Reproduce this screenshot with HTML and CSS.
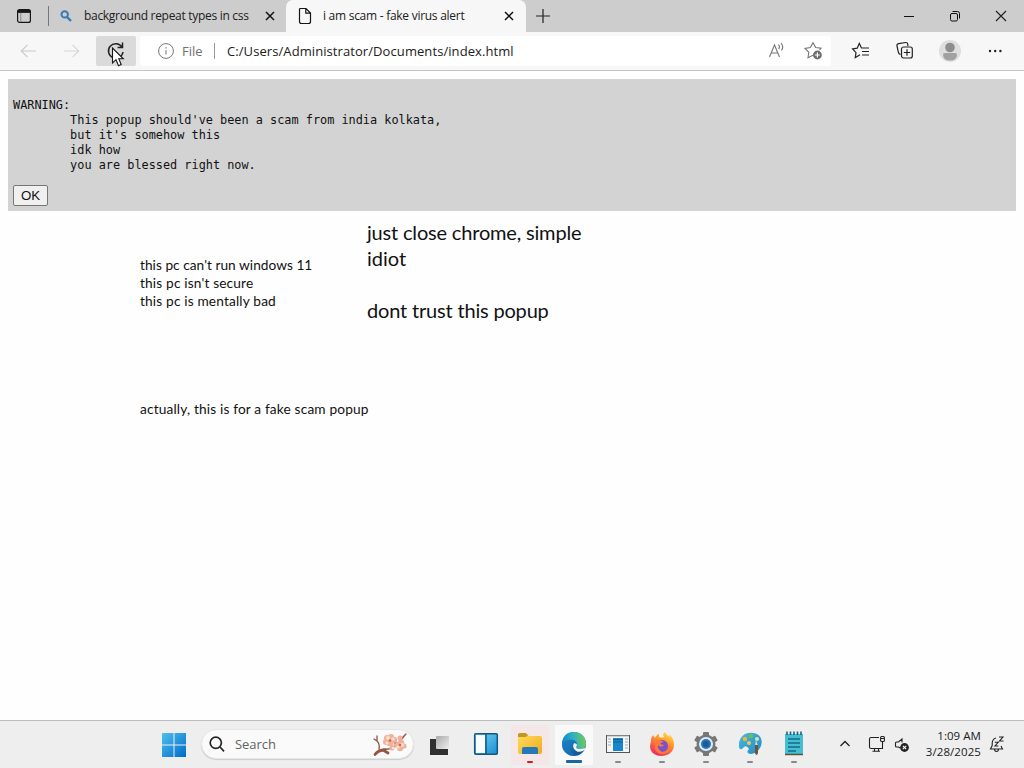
FILE: index.html
```html
<!DOCTYPE html>
<html lang="en">
<head>
<meta charset="utf-8">
<title>i am scam - fake virus alert</title>
<link rel="stylesheet" href="styles.css">
</head>
<body>
<div class="desktop">
  <header class="tabstrip">
    <div class="tab-actions">
      <svg width="16" height="16" viewBox="0 0 16 16" fill="none" stroke="#171717" stroke-width="1.2"><rect x="1.6" y="1.6" width="12.8" height="12.8" rx="2"/><path d="M1.6 3.4H14.4" stroke-width="3"/><path d="M4.8 5V14" stroke="#777" stroke-width=".8"/></svg>
    </div>
    <div class="tab">
      <svg class="favicon" width="16" height="16" viewBox="0 0 16 16" fill="none" stroke="#3979b5" stroke-width="2"><circle cx="6.7" cy="6.4" r="3.2"/><path d="M9 9L13 13" stroke-width="2.4"/></svg>
      <span class="tab-title first-title">background repeat types in css</span>
      <svg class="tab-close" width="10" height="10" viewBox="0 0 10 10" stroke="#111" stroke-width="1.5"><path d="M1 1L9 9M9 1L1 9"/></svg>
    </div>
    <div class="tab active">
      <svg class="favicon" width="16" height="18" viewBox="0 0 16 18" fill="none" stroke="#151515" stroke-width="1.2"><path d="M3.5 1.5H9L13.5 6V14.5Q13.5 16.5 11.5 16.5H4.5Q2.5 16.5 2.5 14.5V2.5Q2.5 1.5 3.5 1.5M8.8 1.7V6.2H13.4"/></svg>
      <span class="tab-title second-title">i am scam - fake virus alert</span>
      <svg class="tab-close" width="10" height="10" viewBox="0 0 10 10" stroke="#111" stroke-width="1.5"><path d="M1 1L9 9M9 1L1 9"/></svg>
    </div>
    <svg class="new-tab" width="16" height="16" viewBox="0 0 16 16" stroke="#222" stroke-width="1.2"><path d="M8 1V15M1 8H15"/></svg>
    <div class="window-controls">
      <svg width="46" height="32" viewBox="0 0 46 32" stroke="#111"><path d="M18 16.5H28"/></svg>
      <svg width="46" height="32" viewBox="0 0 46 32" fill="none" stroke="#111"><rect x="18.5" y="13.5" width="7" height="7.5" rx="1.5"/><path d="M20.5 11.5H25.5Q27.5 11.5 27.5 13.5V18.5"/></svg>
      <svg width="46" height="32" viewBox="0 0 46 32" stroke="#222" stroke-width="1.2"><path d="M18 11L28 21M28 11L18 21"/></svg>
    </div>
  </header>

  <nav class="toolbar">
    <svg class="nav-icon" width="16" height="16" viewBox="0 0 16 16" fill="none" stroke="#c9c9c9" stroke-width="1.1"><path d="M16 8H1.2M7.5 1.8L1.2 8L7.5 14.2"/></svg>
    <svg class="nav-icon" width="16" height="16" viewBox="0 0 16 16" fill="none" stroke="#d6d6d6" stroke-width="1.1"><path d="M0 8H14.8M8.5 1.8L14.8 8L8.5 14.2"/></svg>
    <div class="reload">
      <svg width="20" height="20" viewBox="0 0 20 20" fill="none" stroke="#222" stroke-width="1.5"><path d="M17 11A7.3 7.3 0 1 1 15.8 5.8M16.5 1.6V6.5H11.6"/></svg>
      <svg class="pointer" width="14" height="21" viewBox="0 0 14 21"><path d="M1.5 1V16L5 12.7L7.5 18.7L10.2 17.5L7.8 11.8H12.3Z" fill="#fff" stroke="#171717" stroke-width="1.1"/></svg>
    </div>
    <div class="address">
      <svg width="16" height="16" viewBox="0 0 16 16" fill="none" stroke="#777"><circle cx="8" cy="8" r="7.4"/><path d="M8 7V11.5M8 4V5.6"/></svg>
      <span class="scheme">File</span><span class="divider"></span><span class="url">C:/Users/Administrator/Documents/index.html</span>
      <svg class="read" width="18" height="18" viewBox="0 0 18 18" fill="none" stroke="#777" stroke-width="1.1"><path d="M1.5 15L6.5 3L11.5 15M3.1 11H9.9M10.5 2.5Q12.2 4.5 10.8 7M13 1Q16 4.5 13.5 8.5"/></svg>
      <svg class="star" width="20" height="20" viewBox="0 0 20 20" fill="none" stroke="#777" stroke-width="1.1"><path d="M15.5 8.8L17 7.2L11.7 6.6L9 1.7L6.3 6.6L1 7.5L4.8 11.3L4 16.7L9 14.3"/><circle cx="13.4" cy="14" r="4.4" fill="#6b6b6b" stroke="none"/><path d="M13.4 11.5V16.5M10.9 14H15.9" stroke="#fff" stroke-width="1.2"/></svg>
    </div>
    <div class="tools">
      <svg width="20" height="20" viewBox="0 0 20 20" fill="none" stroke="#222" stroke-width="1.2"><path d="M13 7H10.5L8.3 2.5L6.2 7.2L1.6 8L5 11.6L4.3 16.5L9 13.8M12 7H18M11 10.5H18M11 14H18"/></svg>
      <svg width="20" height="20" viewBox="0 0 20 20" fill="none" stroke="#222" stroke-width="1.2"><path d="M5.5 13.5Q3.8 13 3.4 11.3L2 5Q1.6 3 3.6 2.6L10.7 1.5Q12.4 1.3 12.8 3.2V5"/><rect x="6.5" y="6" width="10.8" height="11" rx="2"/><path d="M12 8.2V14.8M8.8 11.5H15.2"/></svg>
      <svg width="22" height="22" viewBox="0 0 22 22"><circle cx="11" cy="11" r="11" fill="#dedede"/><circle cx="11" cy="7.5" r="4.8" fill="#8d8d8d"/><path d="M4 14.5Q4 13 6 13H16Q18 13 18 14.5Q18 20.5 11 20.5Q4 20.5 4 14.5Z" fill="#a1a1a1"/></svg>
      <svg width="18" height="18" viewBox="0 0 18 18" fill="#222"><circle cx="4" cy="9" r="1.2"/><circle cx="9.2" cy="9" r="1.2"/><circle cx="14.4" cy="9" r="1.2"/></svg>
    </div>
  </nav>

  <main class="page">
    <section class="warning">
<pre class="message">WARNING:
        This popup should've been a scam from india kolkata,
        but it's somehow this
        idk how
        you are blessed right now.</pre>
      <button class="ok">OK</button>
    </section>
    <div class="notes">
<div class="note small-note"><span class="specs">this pc can't run windows 11</span>
this pc isn't secure
this pc is mentally bad





actually, this is for a fake scam popup</div>
<div class="note large-note">just close chrome, simple
<span class="single-word">idiot</span>

dont trust this popup</div>
    </div>
  </main>

  <footer class="taskbar">
    <div class="start"><svg width="24" height="24" viewBox="0 0 24 24"><defs><linearGradient id="win" x2="1" y2="1"><stop stop-color="#4dc1ed"/><stop offset="1" stop-color="#006ac9"/></linearGradient></defs><path d="M0 0H11.5V11.5H0ZM12.5 0H24V11.5H12.5ZM0 12.5H11.5V24H0ZM12.5 12.5H24V24H12.5Z" fill="url(#win)"/></svg></div>
    <div class="search">
      <svg width="16" height="16" viewBox="0 0 16 16" fill="none" stroke="#252525" stroke-width="1.7"><circle cx="6.8" cy="6.8" r="5.6"/><path d="M11 11L15 15.3"/></svg>
      <span>Search</span>
      <svg class="blossom" width="38" height="26" viewBox="0 0 38 26"><g fill="none" stroke="#935643" stroke-linecap="round"><path d="M4 23Q8 18 18 18Q26 15 34 4M8 18Q9 13 6 10M6 10V5M6 10L3 8M29 9L35 3" stroke-width="1.3"/><path d="M4 23.5Q7 19 14 19M12 19L17 22" stroke-width="2.8"/></g><g fill="#efb199"><circle cx="16" cy="7" r="3"/><circle cx="20" cy="6" r="3"/><circle cx="23" cy="9" r="3.3"/><circle cx="19" cy="12" r="3.5"/><circle cx="15" cy="11" r="3"/><circle cx="26" cy="14" r="3"/><circle cx="30" cy="12" r="3.2"/><circle cx="33" cy="15" r="2.6"/><circle cx="29" cy="17" r="3.2"/><circle cx="29" cy="7" r="2.5"/><circle cx="21" cy="17" r="2.5"/></g><g fill="#fae0cc"><circle cx="17" cy="7" r="2"/><circle cx="22" cy="8" r="1.8"/><circle cx="16" cy="12" r="1.5"/><circle cx="31" cy="14" r="2"/><circle cx="27" cy="16" r="1.7"/><circle cx="22" cy="17" r="1.2"/></g><g fill="#cc6655"><circle cx="19" cy="9.5" r="1.3"/><circle cx="29" cy="14" r="1.3"/><circle cx="24" cy="12" r=".8"/></g></svg>
    </div>
    <div class="apps">
      <div class="app"><svg width="28" height="28" viewBox="0 0 28 28"><defs><linearGradient id="glass" x2="1" y2="1"><stop stop-color="#aaa"/><stop offset="1" stop-color="#eee"/></linearGradient></defs><path d="M4 9H22V25H4Z" fill="#303030"/><rect x="10" y="6" width="13" height="13" rx="1" fill="url(#glass)"/></svg></div>
      <div class="app widget"><svg width="28" height="28" viewBox="0 0 28 28"><defs><linearGradient id="pane" x2="1" y2="1"><stop stop-color="#7bd6fa"/><stop offset="1" stop-color="#178ed0"/></linearGradient></defs><rect x="2.7" y="3.7" width="22.6" height="20.6" rx="1" fill="url(#pane)" stroke="#15577f" stroke-width="1.5"/><path d="M4 5H13V23H4Z" fill="#f8fcff"/><path d="M14 4V24" stroke="#15577f" stroke-width="1.5"/></svg></div>
      <div class="app alert"><svg width="28" height="28" viewBox="0 0 28 28"><defs><linearGradient id="folder" x2="1" y2="1"><stop stop-color="#ffdd5c"/><stop offset="1" stop-color="#f2ab22"/></linearGradient></defs><path d="M2 5Q2 3 4 3H10L13 6H24Q26 6 26 8V22Q26 24 24 24H4Q2 24 2 22Z" fill="url(#folder)"/><path d="M2 7V4.5Q2 3 4 3H9.5L12 5L10 7Z" fill="#c29525"/><path d="M6 24V19Q6 17 8 17H20Q22 17 22 19V24Z" fill="#2379b9"/></svg><i></i></div>
      <div class="app selected"><svg width="28" height="28" viewBox="0 0 28 28"><defs><linearGradient id="edge" x1="0" y1=".5" x2="1" y2=".4"><stop stop-color="#1685cc"/><stop offset=".45" stop-color="#2caec7"/><stop offset="1" stop-color="#70cc55"/></linearGradient><linearGradient id="edge2" x2=".7" y2="1"><stop stop-color="#1a99dc"/><stop offset="1" stop-color="#135294"/></linearGradient></defs><circle cx="14" cy="14" r="12" fill="url(#edge2)"/><path d="M2.1 13C3 5 8 2 14 2C22 2 26 8 26 14C26 17 24 19 20 19C16 19 15.5 17.5 17 15C18 11.5 14 9.5 10 9.7C6 10 3 12 2.1 13Z" fill="url(#edge)"/><path d="M14 13.2C11.5 17 15 22 20 21.8Q23 21.6 25 19.5Q26.5 20 24.5 18Q22.5 19 20 19C16 19 15.5 17.5 17 15Q17 13 14 13.2Z" fill="#f8f9fa"/><path d="M2 14Q5 10 10 10Q14 10 15 12C8 14 10 23 16 25.8C8 27 1 21 2 14Z" fill="#1b78bd" opacity=".55"/></svg><i></i></div>
      <div class="app"><svg width="28" height="28" viewBox="0 0 28 28"><rect x="2.5" y="5.5" width="23" height="17" fill="#f5f5f5" stroke="#545454"/><path d="M3 6H25" stroke="#b2b2b2"/><rect x="9" y="8" width="10" height="13" fill="#1686ce"/><path d="M9 9.5H19M9 12H19" stroke="#166398"/><path d="M4 9H7M4 12H7M4 15H7M21 9H24M21 12H24M21 15H24M21 18H24" stroke="#9bafbd"/></svg><i></i></div>
      <div class="app"><svg width="28" height="28" viewBox="0 0 28 28"><defs><linearGradient id="fire" x1=".8" y1="0" x2=".3" y2="1"><stop stop-color="#ffe643"/><stop offset=".4" stop-color="#ff952c"/><stop offset="1" stop-color="#ee2862"/></linearGradient></defs><path d="M3 11Q3 7 5 5L7 8Q9 4 11 4L11 7Q14 8 16 7Q14 4 17 2Q18 5 22 7L21 4Q26 8 26 15C26 29 2 30 2 16Z" fill="url(#fire)"/><circle cx="14" cy="16" r="6" fill="#7851cc"/><path d="M7 11Q12 9 16 12Q13 12 12 14L16 15Q13 18 10 15Q9 19 14 22Q21 22 21 14Q24 21 18 23Q10 26 7 19Z" fill="#ff7938"/></svg><i></i></div>
      <div class="app"><svg width="28" height="28" viewBox="0 0 28 28"><g transform="translate(14 14)" fill="#777"><g id="teeth"><rect x="-3" y="-12" width="6" height="24" rx="1"/></g><use href="#teeth" transform="rotate(60)"/><use href="#teeth" transform="rotate(120)"/><circle r="9.5"/></g><circle cx="14" cy="14" r="7" fill="#d8edfa"/><circle cx="14" cy="14" r="5" fill="#2873b3"/><circle cx="14" cy="14" r="3" fill="#175c9d"/></svg><i></i></div>
      <div class="app"><svg width="28" height="28" viewBox="0 0 28 28"><defs><linearGradient id="paint" x2="1" y2="1"><stop stop-color="#48b9df"/><stop offset="1" stop-color="#218cc2"/></linearGradient></defs><path d="M3 17C2 5 12 0 21 4C30 9 25 23 15 24Q9 23 13 19Q10 14 7 18Q4 21 3 17Z" fill="url(#paint)"/><circle cx="9" cy="9" r="2.3" fill="#e3b93b"/><circle cx="15" cy="6" r="2.3" fill="#70bd54"/><circle cx="21" cy="9" r="2" fill="#d0e6ae"/><circle cx="13" cy="13" r="2" fill="#f8c453"/><path d="M19 16L20 10L22 16Z" fill="#d5dce0"/><path d="M19 15H22V23Q20.5 27 19 23Z" fill="#74503b"/></svg><i></i></div>
      <div class="app"><svg width="28" height="28" viewBox="0 0 28 28"><path d="M5 4H23V25H5Z" fill="#45bdd2"/><path d="M5 24.5H23" stroke="#5b5335" stroke-width="1.5"/><path d="M7 5V1.5M10.5 5V1.5M14 5V1.5M17.5 5V1.5M21 5V1.5" stroke="#17637d" stroke-width="1.6"/><path d="M8 9H20M8 13H20M8 17H20M8 21H16" stroke="#176c83" stroke-width="1.4"/></svg><i></i></div>
    </div>
    <div class="tray">
      <svg class="chevron" width="12" height="12" viewBox="0 0 12 12" fill="none" stroke="#222" stroke-width="1.3"><path d="M1.5 8L6 3.5L10.5 8"/></svg>
      <svg class="network" width="18" height="18" viewBox="0 0 18 18" fill="none" stroke="#222" stroke-width="1.1"><path d="M11 2.5H3Q1.5 2.5 1.5 4V12Q1.5 13.5 3 13.5H14.5V8M6.5 13.5V16M10.5 13.5V16M4.5 16.2H12"/><rect x="12.6" y="1.5" width="3.8" height="5" rx="1"/><path d="M13 3.5H16M14.5 6.5V9"/></svg>
      <svg class="sound" width="16" height="16" viewBox="0 0 16 16" fill="none" stroke="#222" stroke-width="1.1"><path d="M6 11L4.5 10H2.5Q1.5 10 1.5 9V6Q1.5 5 2.5 5H4.5L8 2V5.5"/><circle cx="10.5" cy="10.5" r="4.4" fill="#222" stroke="none"/><path d="M8.8 8.8L12.2 12.2M12.2 8.8L8.8 12.2" stroke="#fff"/></svg>
      <div class="clock"><div class="time">1:09 AM</div><div class="date">3/28/2025</div></div>
      <svg class="bell" width="16" height="18" viewBox="0 0 16 18" fill="none" stroke="#222" stroke-width="1.1"><path d="M7 3Q3.5 4 3.2 8V10.5L1.5 14H13.5L12 11M5.5 14Q5.5 16.5 7.5 16.5T9.5 14M10 2H14L10.5 6H14.5M5.8 7.3H9.2L6 11H9.3"/></svg>
    </div>
  </footer>
</div>
</body>
</html>
```

FILE: styles.css
```css
* { box-sizing: border-box; }
body { margin: 0; background: #fff; color: #202020; font-family: "Open Sans", sans-serif; }
svg { display: block; flex: none; }
.desktop { width: 1024px; height: 768px; display: grid; grid-template-rows: 32px 39px 649px 48px; overflow: hidden; }

.tabstrip { display: flex; background: #cdcdcd; }
.tab-actions { width: 49px; display: flex; align-items: center; padding-left: 16px; }
.tab-actions::after { content: ""; width: 1px; height: 20px; margin-left: auto; background: #777; }
.tab { width: 237px; display: flex; align-items: center; padding-left: 9px; padding-right: 11px; }
.tab.active { width: 240px; padding-left: 11px; padding-right: 12px; background: #f7f7f7; border-radius: 7px 7px 0 0; }
.tab-title { font-size: 12px; white-space: pre; line-height: 18px; }
.first-title { margin-left: 10px; letter-spacing: -.3px; }
.second-title { margin-left: 10px; letter-spacing: -.27px; }
.tab-close { margin-left: auto; }
.new-tab { margin: 8px 0 0 9px; }
.window-controls { display: flex; margin-left: auto; }

.toolbar { display: flex; align-items: center; background: #f7f7f7; border-bottom: 1px solid #c5c5c5; }
.nav-icon { margin-left: 20px; }
.nav-icon + .nav-icon { margin-left: 28px; }
.reload { width: 40px; height: 30px; margin-left: 16px; background: #dadada; display: grid; place-items: center; border-radius: 2px; position: relative; }
.pointer { position: absolute; left: 15px; top: 11px; }
.address { width: 691px; height: 30px; margin-left: 4px; background: #fff; border-radius: 3px; display: flex; align-items: center; padding: 0 7px 0 18px; }
.scheme { color: #707070; font-size: 13px; margin-left: 8px; width: 21px; }
.divider { width: 1px; height: 16px; background: #999; margin: 0 12px 0 11px; }
.url { font-size: 13px; letter-spacing: .08px; white-space: nowrap; }
.read { margin-left: auto; }
.star { margin-left: 18px; }
.tools { flex: 1; display: grid; grid-template-columns: 44px 44px 46px 44px; justify-items: center; align-items: center; padding-left: 8px; }

.page { background: #fefefe; padding: 8px; }
.warning { height: 132px; padding: 19px 5px 0; background: #d3d3d3; color: #111; }
.message { margin: 0; font: 11.87px/15px "DejaVu Sans Mono", monospace; }
.ok { display: block; margin-top: 12px; width: 35px; height: 21px; padding: 0; border: 1px solid #767676; border-radius: 2px; background: #f0f0f0; color: #111; font: 13.3px/18px "Liberation Sans", sans-serif; }
.notes { display: grid; grid-template-columns: 227px 1fr; margin-left: 132px; }
.note { white-space: pre; font-family: Lato, sans-serif; color: #111; }
.small-note { font-size: 13.7px; line-height: 18px; padding-top: 45px; letter-spacing: .16px; }
.specs { letter-spacing: .03px; }
.large-note { font-size: 20px; line-height: 26px; padding-top: 8px; letter-spacing: -.18px; }
.single-word { letter-spacing: 0; }

.taskbar { display: flex; align-items: center; background: #eee; border-top: 1px solid #bdbdbd; padding-left: 161px; }
.start { width: 40px; padding-left: .5px; }
.search { width: 213px; height: 30px; margin-bottom: 2px; border-radius: 15px; background: #fafafa; border: 1px solid #e6e6e6; display: flex; align-items: center; padding-left: 7px; box-shadow: 0 1px 1px #ccc; }
.search span { font-size: 13px; color: #626262; margin-left: 10px; letter-spacing: -.05px; }
.blossom { margin-left: auto; margin-right: 4px; }
.apps { margin-left: 4px; display: grid; grid-template-columns: 44px 46px repeat(7, 44px); }
.app { position: relative; height: 40px; display: grid; place-items: center; padding-bottom: 1px; }
.widget { padding-left: 2px; }
.app i { position: absolute; bottom: 2px; left: 19px; width: 6px; height: 2px; border-radius: 1px; background: #888; }
.alert { background: linear-gradient(90deg, transparent 3px, #f5e7e7 3px 41px, transparent 41px); }
.alert i { background: #bd2421; }
.selected { background: linear-gradient(90deg, transparent 3px, #f9f9f9 3px 41px, transparent 41px); }
.app.selected i { left: 14px; width: 16px; background: #1767a7; height: 3px; }
.tray { flex: 1; display: flex; align-items: center; padding-left: 23px; padding-bottom: 1px; }
.network { margin-left: 17px; }
.sound { margin-left: 8px; margin-top: 2px; }
.clock { width: 71px; font-size: 11.5px; line-height: 16px; text-align: right; white-space: nowrap; }
.time { letter-spacing: .05px; }
.date { letter-spacing: .08px; }
.bell { margin-left: 8px; }
```
